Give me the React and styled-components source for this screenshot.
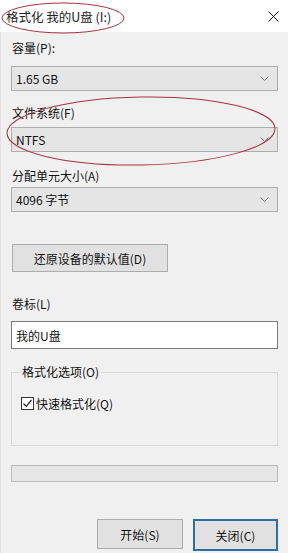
import React from 'react';
import styled, { createGlobalStyle } from 'styled-components';

const GlobalStyle = createGlobalStyle`
  html, body {
    margin: 0;
    padding: 0;
    background: #f0f0f0;
  }
  * {
    box-sizing: border-box;
  }
`;

const Window = styled.div`
  position: relative;
  width: 288px;
  height: 553px;
  overflow: hidden;
  display: flex;
  flex-direction: column;
  background: #f0f0f0;
  font-family: "Noto Sans CJK SC", "Microsoft YaHei", sans-serif;
  font-size: 12px;
  color: #111;
`;

const TitleBar = styled.div`
  height: 32px;
  flex: none;
  display: flex;
  align-items: center;
  justify-content: space-between;
  background: #fff;
  padding: 0 8px 0 6px;
`;

const Title = styled.div`
  font-size: 12.5px;
  color: #222;
`;

const CloseIcon = styled.svg`
  width: 11px;
  height: 11px;
  margin-right: 1px;
`;

const Body = styled.div`
  flex: 1;
  display: flex;
  flex-direction: column;
  padding: 8px 10px 0 10px;
  border-left: 1px solid #e4e0e0;
`;

const Label = styled.div`
  line-height: 16px;
  height: 16px;
  margin-top: ${(p) => p.$top}px;
  padding-left: 1px;
`;

const SelectBox = styled.div`
  height: ${(p) => p.$h || 25}px;
  margin-top: ${(p) => p.$top}px;
  display: flex;
  align-items: center;
  justify-content: space-between;
  background: #e5e5e5;
  border: 1px solid #adadad;
  padding: 0 8px 0 4px;
`;

const Chevron = styled.svg`
  width: 9px;
  height: 5px;
`;

const PlainButton = styled.div`
  width: ${(p) => p.$w}px;
  height: ${(p) => p.$h || 28}px;
  margin-top: ${(p) => p.$top || 0}px;
  display: flex;
  align-items: center;
  justify-content: center;
  background: #e1e1e1;
  border: ${(p) => (p.$focus ? '2px solid #2b6ea8' : '1px solid #adadad')};
  color: #111;
`;

const TextInput = styled.div`
  height: 28px;
  margin-top: ${(p) => p.$top}px;
  display: flex;
  align-items: center;
  background: #fff;
  border: 1px solid #7a7a7a;
  padding: 0 4px;
`;

const GroupBox = styled.fieldset`
  margin: 16px 0 0 0;
  height: 81px;
  border: 1px solid #d9d9d9;
  padding: 10px 9px 0 9px;

  legend {
    padding: 0 2px;
    margin-left: -1px;
    line-height: 14px;
  }
`;

const CheckRow = styled.label`
  display: flex;
  align-items: center;
  gap: 2px;
  margin-top: 6px;
`;

const CheckBox = styled.span`
  width: 13px;
  height: 13px;
  border: 1px solid #333;
  background: #fff;
  display: flex;
  align-items: center;
  justify-content: center;
`;

const Progress = styled.div`
  height: 17px;
  margin-top: 19px;
  background: #e6e6e6;
  border: 1px solid #bcbcbc;
`;

const Footer = styled.div`
  display: flex;
  justify-content: flex-end;
  gap: 10px;
  margin-top: 37px;
`;

const Annotation = styled.svg`
  position: absolute;
  left: 0;
  top: 0;
  width: 288px;
  height: 553px;
  pointer-events: none;
`;

const Select = ({ value, top }) => (
  <SelectBox $top={top}>
    <span>{value}</span>
    <Chevron viewBox="0 0 9 5">
      <path d="M0.5 0.5 L4.5 4.5 L8.5 0.5" fill="none" stroke="#7a7a7a" strokeWidth="1" />
    </Chevron>
  </SelectBox>
);

export default function App() {
  return (
    <>
      <GlobalStyle />
      <Window>
        <TitleBar>
          <Title>格式化 我的U盘 (I:)</Title>
          <CloseIcon viewBox="0 0 11 11">
            <path d="M0.5 0.5 L10.5 10.5 M10.5 0.5 L0.5 10.5" stroke="#111" strokeWidth="1" />
          </CloseIcon>
        </TitleBar>
        <Body>
          <Label $top={0}>容量(P):</Label>
          <Select value="1.65 GB" top={10} />
          <Label $top={14}>文件系统(F)</Label>
          <Select value="NTFS" top={6} />
          <Label $top={16}>分配单元大小(A)</Label>
          <Select value="4096 字节" top={3} />
          <PlainButton $w={156} $top={32} style={{ marginLeft: 1 }}>还原设备的默认值(D)</PlainButton>
          <Label $top={24}>卷标(L)</Label>
          <TextInput $top={9}>我的U盘</TextInput>
          <GroupBox>
            <legend>格式化选项(O)</legend>
            <CheckRow>
              <CheckBox>
                <svg width="11" height="11" viewBox="0 0 11 11">
                  <path d="M1.5 5.5 L4.2 8.3 L9.5 2" fill="none" stroke="#222" strokeWidth="1.2" />
                </svg>
              </CheckBox>
              快速格式化(Q)
            </CheckRow>
          </GroupBox>
          <Progress />
          <Footer>
            <PlainButton $w={86} $h={30}>开始(S)</PlainButton>
            <PlainButton $w={85} $h={32} $focus>关闭(C)</PlainButton>
          </Footer>
        </Body>
        <Annotation viewBox="0 0 288 553">
          <ellipse cx="63" cy="18" rx="61" ry="15" fill="none" stroke="#a8323e" strokeWidth="1" />
          <ellipse cx="141" cy="131" rx="134" ry="34" fill="none" stroke="#a8323e" strokeWidth="1" transform="rotate(-1 141 131)" />
        </Annotation>
      </Window>
    </>
  );
}
